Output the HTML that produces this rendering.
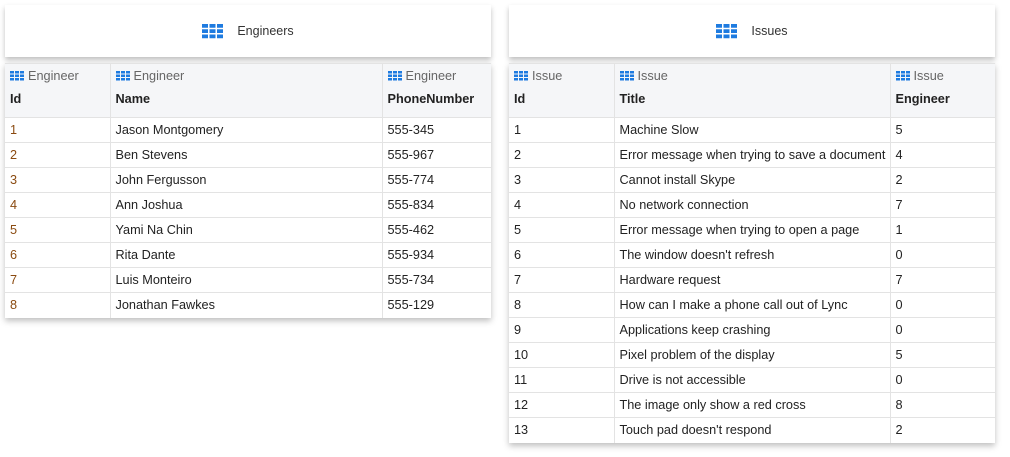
<!DOCTYPE html>
<html><head><style>
body{margin:0;width:1010px;height:457px;background:#fff;font-family:"Liberation Sans",sans-serif;position:relative;overflow:hidden}
.title{position:absolute;top:5px;height:52px;width:486px;background:#fff;box-shadow:0 3px 5px rgba(0,0,0,.25);display:flex;align-items:center;justify-content:center;font-size:12.5px;color:#333}
.title svg{margin-right:14px}
table{position:absolute;top:63px;width:486px;border-collapse:collapse;table-layout:fixed;font-size:12.7px;color:#222;box-shadow:0 3px 6px rgba(0,0,0,.25);background:#fff}
td,th{border:1px solid #e3e3e3;padding:0 5px;text-align:left;height:24px;box-sizing:border-box;white-space:nowrap;overflow:hidden}
td{height:25px}
tr:first-child td{border-top:none}
td:first-child,th:first-child{border-left:none}
td:last-child,th:last-child{border-right:none}
tr:last-child td{border-bottom:none}
th{background:#f5f6f8;height:54px;vertical-align:top;font-weight:bold;color:#222;padding-top:5px}
th .s{font-weight:normal;color:#666;display:flex;align-items:center;gap:4px;margin-bottom:9px}
.l td:first-child{color:#8a4a10}
</style></head><body>
<svg width="0" height="0" style="position:absolute"><defs>
<g id="g"><rect x="0" y="0" width="4" height="2.5" fill="#1e7be0"/><rect x="5" y="0" width="4" height="2.5" fill="#1e7be0"/><rect x="10" y="0" width="4" height="2.5" fill="#1e7be0"/><rect x="0" y="3.5" width="4" height="2.5" fill="#1e7be0"/><rect x="5" y="3.5" width="4" height="2.5" fill="#1e7be0"/><rect x="10" y="3.5" width="4" height="2.5" fill="#1e7be0"/><rect x="0" y="7" width="4" height="2.5" fill="#1e7be0"/><rect x="5" y="7" width="4" height="2.5" fill="#1e7be0"/><rect x="10" y="7" width="4" height="2.5" fill="#1e7be0"/></g>
</defs></svg>
<div class="title" style="left:5px"><svg width="21" height="15" viewBox="0 0 14 10"><use href="#g"/></svg>Engineers</div>
<div class="title" style="left:509px"><svg width="21" height="15" viewBox="0 0 14 10"><use href="#g"/></svg>Issues</div>
<table class="l" style="left:5px">
<colgroup><col style="width:105px"><col style="width:272px"><col style="width:109px"></colgroup>
<tr><th><div class="s"><svg width="14" height="10"><use href="#g"/></svg>Engineer</div>Id</th><th><div class="s"><svg width="14" height="10"><use href="#g"/></svg>Engineer</div>Name</th><th><div class="s"><svg width="14" height="10"><use href="#g"/></svg>Engineer</div>PhoneNumber</th></tr>
<tr><td>1</td><td>Jason Montgomery</td><td>555-345</td></tr>
<tr><td>2</td><td>Ben Stevens</td><td>555-967</td></tr>
<tr><td>3</td><td>John Fergusson</td><td>555-774</td></tr>
<tr><td>4</td><td>Ann Joshua</td><td>555-834</td></tr>
<tr><td>5</td><td>Yami Na Chin</td><td>555-462</td></tr>
<tr><td>6</td><td>Rita Dante</td><td>555-934</td></tr>
<tr><td>7</td><td>Luis Monteiro</td><td>555-734</td></tr>
<tr><td>8</td><td>Jonathan Fawkes</td><td>555-129</td></tr>
</table>
<table style="left:509px">
<colgroup><col style="width:105px"><col style="width:276px"><col style="width:105px"></colgroup>
<tr><th><div class="s"><svg width="14" height="10"><use href="#g"/></svg>Issue</div>Id</th><th><div class="s"><svg width="14" height="10"><use href="#g"/></svg>Issue</div>Title</th><th><div class="s"><svg width="14" height="10"><use href="#g"/></svg>Issue</div>Engineer</th></tr>
<tr><td>1</td><td>Machine Slow</td><td>5</td></tr>
<tr><td>2</td><td>Error message when trying to save a document</td><td>4</td></tr>
<tr><td>3</td><td>Cannot install Skype</td><td>2</td></tr>
<tr><td>4</td><td>No network connection</td><td>7</td></tr>
<tr><td>5</td><td>Error message when trying to open a page</td><td>1</td></tr>
<tr><td>6</td><td>The window doesn't refresh</td><td>0</td></tr>
<tr><td>7</td><td>Hardware request</td><td>7</td></tr>
<tr><td>8</td><td>How can I make a phone call out of Lync</td><td>0</td></tr>
<tr><td>9</td><td>Applications keep crashing</td><td>0</td></tr>
<tr><td>10</td><td>Pixel problem of the display</td><td>5</td></tr>
<tr><td>11</td><td>Drive is not accessible</td><td>0</td></tr>
<tr><td>12</td><td>The image only show a red cross</td><td>8</td></tr>
<tr><td>13</td><td>Touch pad doesn't respond</td><td>2</td></tr>
</table>
</body></html>
